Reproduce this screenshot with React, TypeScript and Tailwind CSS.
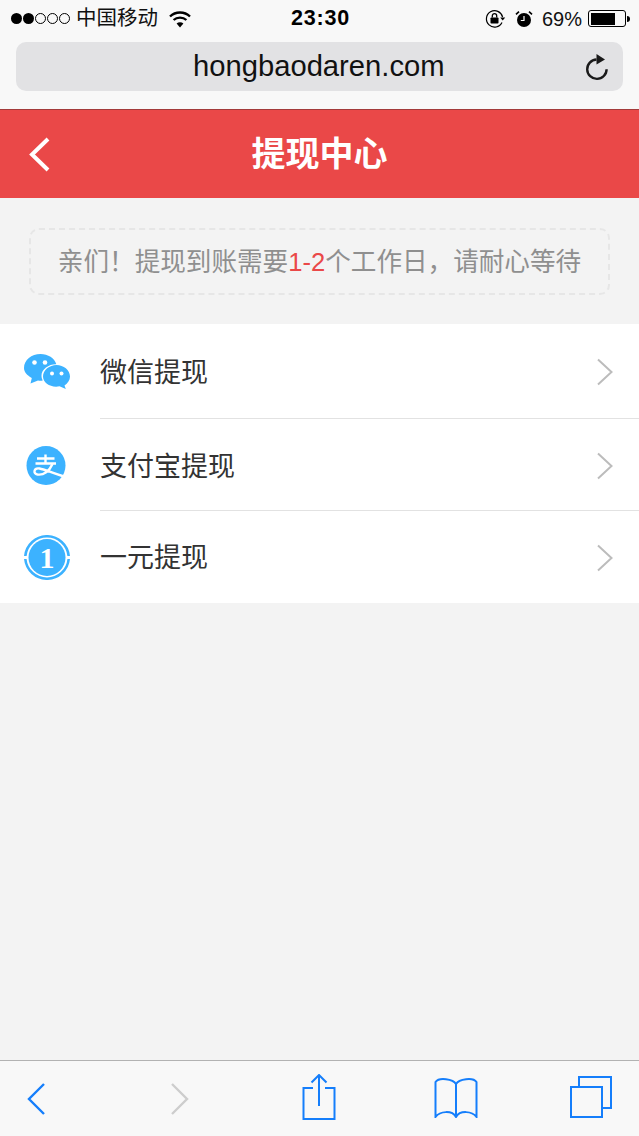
const font = "font-['Liberation_Sans','Noto_Sans_CJK_SC',sans-serif]";

function Signal() {
  return (
    <div className="flex items-center gap-[1px]">
      <span className="w-[11px] h-[11px] rounded-full bg-black" />
      <span className="w-[11px] h-[11px] rounded-full bg-black" />
      <span className="w-[11px] h-[11px] rounded-full border border-black" />
      <span className="w-[11px] h-[11px] rounded-full border border-black" />
      <span className="w-[11px] h-[11px] rounded-full border border-black" />
    </div>
  );
}

function Wifi() {
  return (
    <svg width="22" height="18" viewBox="0 0 22 18" fill="none" stroke="#000" strokeWidth="2.4">
      <path d="M1 6.5C6.5 1.2 15.5 1.2 21 6.5" />
      <path d="M4.6 10C8 6.8 14 6.8 17.4 10" />
      <path d="M11 17.5L7.6 13.4C9.5 11.8 12.5 11.8 14.4 13.4Z" fill="#000" stroke="none" />
    </svg>
  );
}

function RotationLock() {
  return (
    <svg width="21" height="20" viewBox="0 0 21 20" fill="none">
      <path d="M17 13.5A8.2 8.2 0 1 1 17.6 8" stroke="#000" strokeWidth="1.2" />
      <path d="M15.2 8.5h5l-2.5 3z" fill="#000" />
      <rect x="5.5" y="8.5" width="8" height="6" rx="0.8" fill="#000" />
      <path d="M7.3 8.5V6.8a2.2 2.2 0 0 1 4.4 0v1.7" stroke="#000" strokeWidth="1.3" />
    </svg>
  );
}

function Alarm() {
  return (
    <svg width="18" height="18" viewBox="0 0 18 18" fill="none">
      <circle cx="9" cy="10" r="7" fill="#000" />
      <path d="M9 6v4.5H5.8" stroke="#fff" strokeWidth="1.2" />
      <path d="M1 4.4L4 1.6M17 4.4L14 1.6" stroke="#000" strokeWidth="1.6" />
    </svg>
  );
}

function Battery() {
  return (
    <div className="flex items-center">
      <div className="w-[38px] h-[17px] rounded-[3px] border border-black p-[1.5px]">
        <div className="h-full w-[24px] bg-black" />
      </div>
      <div className="ml-[1px] w-[3px] h-[6px] rounded-r-sm bg-black" />
    </div>
  );
}

function Reload() {
  return (
    <svg width="24" height="28" viewBox="0 0 24 28" fill="none">
      <path d="M11.5 6.5A9.7 9.7 0 1 0 21.6 16.2" stroke="#1a1a1a" strokeWidth="2.4" />
      <path d="M11.5 1L20 6.5L11.5 11.5Z" fill="#1a1a1a" />
    </svg>
  );
}

function WechatIcon() {
  return (
    <svg width="46" height="37" viewBox="0 0 46 37" fill="none">
      <path d="M0 15C0 7 7.5 1 16.5 1c7.6 0 14 4.2 15.800 10.200C25.500 10.800 17.500 15.800 17.500 22.500c0 2 .5 3.500 1.200 4.900-1.500.3-3 .3-4.700 0L6.500 30.500l1.300-5.500C3 22.300 0 19 0 15Z" fill="#3cb2ff" />
      <path d="M19 23.500C19 17 25.500 12 32.500 12S46 17 46 23.500c0 3.800-2.300 6.800-5.500 9l1.300 3.500-6.300-2.700c-8.500 1.700-16.500-3.300-16.500-9.800Z" fill="#3cb2ff" />
      <circle cx="10.500" cy="9.500" r="2.300" fill="#fff" />
      <circle cx="21" cy="9.500" r="2.300" fill="#fff" />
      <circle cx="28" cy="20.500" r="2" fill="#fff" />
      <circle cx="37.500" cy="20.500" r="2" fill="#fff" />
    </svg>
  );
}

function AlipayIcon() {
  return (
    <svg className="mr-[1px]" width="40" height="39" viewBox="0 0 40 39" fill="none">
      <circle cx="20" cy="19.500" r="19.500" fill="#3cb2ff" />
      <path d="M11 12.500H28.500M19.500 8.500V17M9.500 17.500H30" stroke="#fff" strokeWidth="2.400" />
      <path d="M26.500 18C23.500 25 17.500 29.500 11.500 28.500C6.500 27.500 8 21.500 13.500 22.500C19 23.500 26 27 38 30.500" stroke="#fff" strokeWidth="2.400" />
    </svg>
  );
}

function OneIcon() {
  return (
    <svg width="46" height="45" viewBox="0 0 46 45" fill="none">
      <path d="M1.300 21A21.800 21.800 0 0 1 44.700 21" stroke="#3cb2ff" strokeWidth="2.600" />
      <path d="M1.300 24A21.800 21.800 0 0 0 44.700 24" stroke="#3cb2ff" strokeWidth="2.600" />
      <circle cx="23" cy="22.500" r="18.500" fill="#3cb2ff" />
      <text x="23" y="33" textAnchor="middle" fill="#fff" fontSize="30" fontWeight="700" fontFamily="'Liberation Serif',serif">1</text>
    </svg>
  );
}

function RowChevron() {
  return (
    <svg width="18" height="28" viewBox="0 0 18 28" fill="none" stroke="#bcbcbc" strokeWidth="2">
      <path d="M2 1.500L15.500 14L2 26.500" />
    </svg>
  );
}

const rows = [
  { label: "微信提现", icon: <WechatIcon />, h: "h-[95px]", pt: "pt-[2px]" },
  { label: "支付宝提现", icon: <AlipayIcon />, h: "h-[92px]", pt: "pt-[3px]" },
  { label: "一元提现", icon: <OneIcon />, h: "h-[92px]", pt: "pt-[1px]" },
];

export default function App() {
  return (
    <div className={`w-[639px] h-[1136px] flex flex-col bg-[#f3f3f3] overflow-hidden ${font}`}>
      {/* safari top */}
      <div className="h-[109px] shrink-0 bg-[#f8f8f8] flex flex-col">
        <div className="h-[37px] flex items-center justify-between pl-[11px] pr-[9px] text-black">
          <div className="flex-1 flex items-center gap-[6px]">
            <Signal />
            <span className="text-[20.500px] text-[#111]">中国移动</span>
            <span className="ml-[5px]"><Wifi /></span>
          </div>
          <span className="text-[21.500px] font-bold tracking-[0.8px]">23:30</span>
          <div className="flex-1 flex items-center justify-end">
            <RotationLock />
            <span className="ml-[9px]"><Alarm /></span>
            <span className="ml-[9px] text-[20px] text-[#111]">69%</span>
            <span className="ml-[6px]"><Battery /></span>
          </div>
        </div>
        <div className="mx-[16px] mt-[5px] h-[49px] rounded-[10px] bg-[#e2e2e4] flex items-center pl-[177px] pr-[14px] justify-between">
          <span className="text-[29.200px] leading-none text-[#111]">hongbaodaren.com</span>
          <Reload />
        </div>
      </div>

      {/* header */}
      <div className="h-[89px] shrink-0 bg-[#ea4848] border-t border-[#a33a3a] relative flex items-center justify-center">
        <svg className="absolute left-[28px] top-[27px]" width="23" height="35" viewBox="0 0 23 35" fill="none" stroke="#fff" strokeWidth="4">
          <path d="M20 2L4 17.500L20 33" />
        </svg>
        <span className="text-[34px] font-bold text-white">提现中心</span>
      </div>

      {/* notice */}
      <div className="h-[126px] shrink-0 pt-[30px] px-[29px]">
        <div className="h-[67px] rounded-[10px] border-2 border-dashed border-[#e6e6e6] flex items-center justify-center text-[25.600px] text-[#8f8f8f] whitespace-nowrap">
          <span className="mt-[1px]">亲们！提现到账需要<span className="text-[#ea4848]">1-2</span>个工作日，请耐心等待</span>
        </div>
      </div>

      {/* options */}
      <div className="bg-white shrink-0 h-[279px]">
        {rows.map((row, i) => (
          <div key={row.label} className={`${row.h} flex relative`}>
            <div className="w-[100px] shrink-0 flex items-center justify-center pr-[7px]">{row.icon}</div>
            <div className={`flex-1 flex items-center justify-between pr-[25px] ${row.pt} ${i < 2 ? "border-b border-[#e2e2e2]" : ""}`}>
              <span className="text-[27px] text-[#333] mt-[2px]">{row.label}</span>
              <RowChevron />
            </div>
          </div>
        ))}
      </div>

      <div className="flex-1" />

      {/* safari bottom */}
      <div className="h-[76px] shrink-0 bg-[#f8f8f8] border-t border-[#b2b2b2] flex items-center relative">
        <svg className="ml-[22px]" width="26" height="36" viewBox="0 0 26 36" fill="none" stroke="#157efb" strokeWidth="2.400">
          <path d="M22 3L7 18L22 33" />
        </svg>
        <svg className="ml-[120px]" width="26" height="36" viewBox="0 0 26 36" fill="none" stroke="#cdcdcd" strokeWidth="2.400">
          <path d="M4 3L19 18L4 33" />
        </svg>
        <svg className="ml-[108px] mt-[-3px]" width="34" height="46" viewBox="0 0 34 46" fill="none" stroke="#157efb" strokeWidth="2">
          <path d="M11 14H1.500V45H32.500V14H23" />
          <path d="M17 1V32M9.500 8.500L17 1L24.500 8.500" />
        </svg>
        <svg className="ml-[98px] mt-[-2px]" width="44" height="41" viewBox="0 0 44 41" fill="none" stroke="#157efb" strokeWidth="2">
          <path d="M22 7C19 2 5 0 1.500 5V40C6 34 18 33 22 40C26 33 38 34 42.500 40V5C39 0 25 2 22 7Z" />
          <path d="M22 7V40" />
        </svg>
        <svg className="ml-[92px] mt-[-3px]" width="43" height="42" viewBox="0 0 43 42" fill="none" stroke="#157efb" strokeWidth="2">
          <rect x="1" y="11" width="31" height="30" />
          <path d="M9 10.500V1H41V32H33" />
        </svg>
      </div>
    </div>
  );
}
